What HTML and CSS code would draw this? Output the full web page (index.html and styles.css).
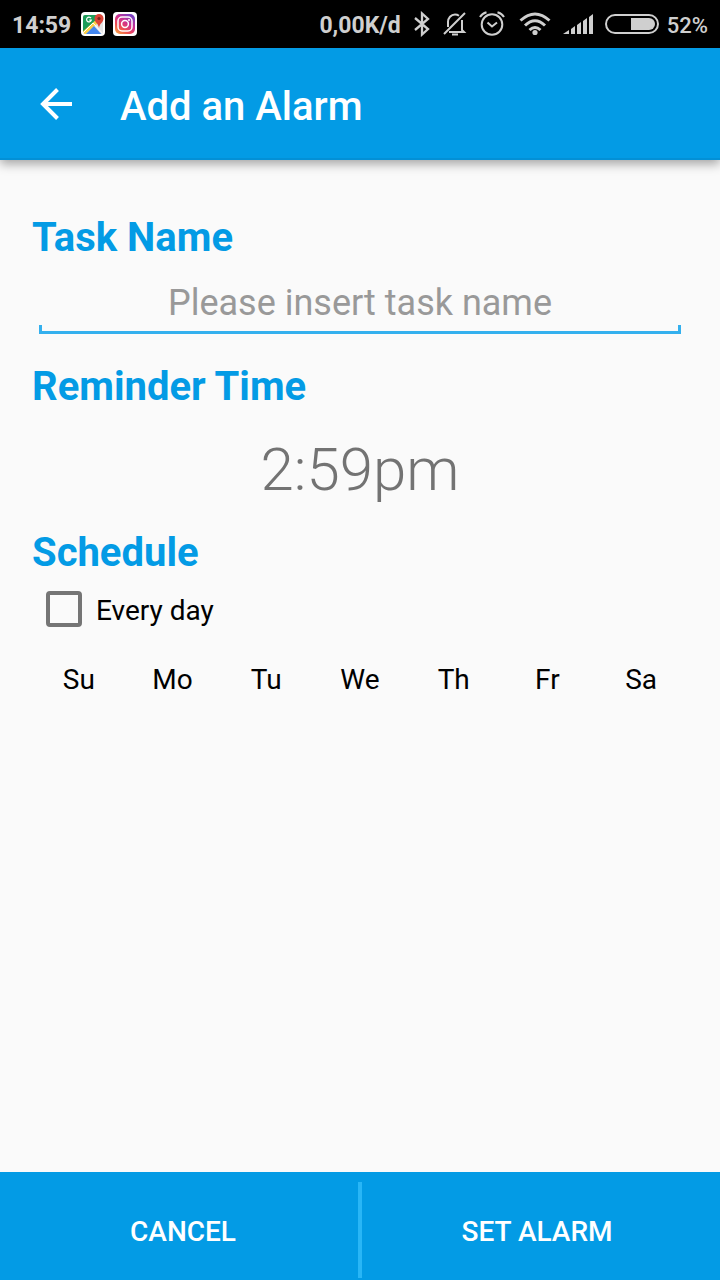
FILE: index.html
```html
<!DOCTYPE html>
<html lang="en">
<head>
    <meta charset="UTF-8">
    <meta name="viewport" content="width=device-width, initial-scale=1">
    <title>Add an Alarm</title>
    <link rel="stylesheet" href="styles.css">
</head>
<body>
<div class="status-bar">
    <div class="status-left">
        <span>14:59</span>
        <!-- maps -->
        <svg width="24" height="24" viewBox="0 0 24 24">
            <defs><clipPath id="mapClip"><rect x="2" y="3" width="20" height="19" rx="2"/></clipPath></defs>
            <rect width="24" height="24" rx="4" fill="#fff"/>
            <g clip-path="url(#mapClip)">
                <rect x="2" y="3" width="20" height="19" fill="#e4e4e4"/>
                <path d="M2 3h15v4L2 20z" fill="#1d9c58"/>
                <path d="M1 20L17 6l2 3L4 23z" fill="#fdd048"/>
                <path d="M4 23l9-9 8 9z" fill="#4286f0"/>
                <path d="M2 21l10-10 11 12" fill="none" stroke="#fff" stroke-width="1"/>
            </g>
            <path d="M10 6.200A2.400 2.400 0 1 0 10.300 8.200H8.300" fill="none" stroke="#fff" stroke-width="1.200"/>
            <path d="M18 2a4.500 4.500 0 0 0-4.500 4.500c0 4 3.800 4.500 4.500 9.500 .7-5 4.500-5.500 4.500-9.500A4.500 4.500 0 0 0 18 2z" fill="#db4437"/>
            <circle cx="18" cy="6.500" r="1.600" fill="#7d241c"/>
        </svg>
        <!-- instagram -->
        <svg width="24" height="24" viewBox="0 0 24 24">
            <defs>
                <linearGradient id="insta" x1="0" y1="1" x2="0.700" y2="0">
                    <stop offset="0" stop-color="#fbb040"/>
                    <stop offset="0.350" stop-color="#ee4d50"/>
                    <stop offset="0.650" stop-color="#cf3090"/>
                    <stop offset="1" stop-color="#7a3fc0"/>
                </linearGradient>
            </defs>
            <rect width="24" height="24" rx="4" fill="#fff"/>
            <rect x="2" y="2" width="20" height="20" rx="5" fill="url(#insta)"/>
            <g fill="none" stroke="#fff" stroke-width="1.500">
                <rect x="5" y="5" width="14" height="14" rx="4"/>
                <circle cx="12" cy="12" r="3.400"/>
            </g>
            <circle cx="16" cy="8" r="1" fill="#fff"/>
        </svg>
    </div>
    <div class="status-right">
        <span>0,00K/d</span>
        <!-- bluetooth -->
        <svg width="18" height="26" viewBox="0 0 18 26" fill="none" stroke="#cfcfcf" stroke-width="2.300">
            <path d="M2 7l13 11-6 5.500V2.500L15 8 2 19"/>
        </svg>
        <!-- muted -->
        <svg width="24" height="26" viewBox="0 0 24 26" fill="none" stroke="#cfcfcf" stroke-width="2">
            <path d="M1 23L22 2M5 16V11c0-4 3-7.500 7-7.500 1.500 0 3 .5 4 1.200M19 9v10l2 2H6"/>
            <path d="M9 23.500h6"/>
        </svg>
        <!-- alarm -->
        <svg class="icon-alarm" width="26" height="26" viewBox="0 0 26 26" fill="none" stroke="#cfcfcf" stroke-width="2">
            <circle cx="13" cy="13.500" r="10.300"/>
            <path d="M8.500 11.500l4.500 4 5-4M1 6q2-3.500 6.500-4.800M25 6q-2-3.500-6.500-4.800"/>
        </svg>
        <!-- wifi -->
        <svg class="icon-wifi" width="32" height="26" viewBox="0 0 32 26" fill="none" stroke="#cfcfcf" stroke-width="3">
            <path d="M1.500 9.500Q16-3.500 30.500 9.500M6 14.500q10-9.500 20 0M10.500 19q5.500-5 11 0"/>
            <circle cx="16" cy="21.500" r="2.600" fill="#cfcfcf" stroke="none"/>
        </svg>
        <!-- signal -->
        <svg class="icon-signal" width="30" height="22" viewBox="0 0 30 22" fill="#cfcfcf">
            <path d="M0 21l6-4v4zM8 16l4-3v8H8zM14 12l4-3v12h-4zM20 8l4-3v16h-4zM26 4l4-3v20h-4z"/>
        </svg>
        <!-- battery -->
        <svg class="icon-battery" width="54" height="22" viewBox="0 0 54 22">
            <rect x="1" y="2" width="52" height="18" rx="9" fill="none" stroke="#cfcfcf" stroke-width="2"/>
            <path d="M26 5h18a6 6 0 0 1 0 12H26z" fill="#cfcfcf"/>
        </svg>
        <span class="percent">52%</span>
    </div>
</div>

<header class="toolbar">
    <button type="button" class="back" aria-label="Back">
        <svg width="32" height="32" viewBox="0 0 32 32" fill="none" stroke="#fff" stroke-width="4">
            <path d="M32 16H3M17.500 1.500L3 16l14.500 14.500"/>
        </svg>
    </button>
    <h1>Add an Alarm</h1>
</header>

<form class="alarm-form" id="alarmForm">
    <h2><label for="taskName">Task Name</label></h2>
    <input type="text" id="taskName" class="task-name" placeholder="Please insert task name">

    <h2>Reminder Time</h2>
    <button type="button" class="time">2:59pm</button>

    <h2>Schedule</h2>
    <div class="every-day">
        <input type="checkbox" id="everyDay">
        <label for="everyDay">Every day</label>
    </div>
    <div class="days">
        <button type="button">Su</button>
        <button type="button">Mo</button>
        <button type="button">Tu</button>
        <button type="button">We</button>
        <button type="button">Th</button>
        <button type="button">Fr</button>
        <button type="button">Sa</button>
    </div>
</form>

<footer class="actions">
    <button type="button">CANCEL</button>
    <span class="divider"></span>
    <button type="submit" form="alarmForm">SET ALARM</button>
</footer>
</body>
</html>
```

FILE: styles.css
```css
* {
    box-sizing: border-box;
}
body {
    margin: 0;
    min-height: 100vh;
    display: flex;
    flex-direction: column;
    background: #fafafa;
    font-family: Roboto, sans-serif;
    color: #000;
}
button {
    padding: 0;
    border: none;
    background: none;
    font-family: inherit;
    color: inherit;
}
svg {
    display: block;
    flex: none;
}

/* status bar */
.status-bar {
    display: flex;
    justify-content: space-between;
    height: 48px;
    padding: 0 12px;
    background: #000;
    color: #cfcfcf;
    font-size: 23px;
    font-weight: 700;
}
.status-left,
.status-right {
    display: flex;
    align-items: center;
}
.status-left {
    gap: 8px;
}
.status-left span {
    padding: 2px 2px 0 0;
}
.status-right {
    gap: 12px;
}
.status-right span {
    padding-top: 2px;
}
.icon-wifi {
    margin-left: 2px;
}
.percent {
    margin-left: -4px;
    font-size: 22px;
    font-weight: 500;
}

/* toolbar */
.toolbar {
    display: flex;
    align-items: center;
    gap: 48px;
    height: 112px;
    padding: 2px 40px 0;
    background: #039be5;
    border-bottom: 2px solid #0390d6;
    box-shadow: 0 4px 10px rgba(0, 0, 0, 0.35);
    color: #fff;
}
.toolbar h1 {
    margin: 0;
    padding-top: 6px;
    font-size: 40px;
    font-weight: 500;
    line-height: 48px;
}

/* form */
.alarm-form {
    flex: 1;
    display: flex;
    flex-direction: column;
    padding: 54px 32px 0;
}
.alarm-form h2 {
    margin: 0;
    font-size: 40px;
    font-weight: 700;
    line-height: 48px;
    color: #039be5;
}
.task-name {
    height: 72px;
    margin: 0 7px 29px;
    padding: 10px 8px 0;
    border: none;
    outline: none;
    /* underline with a small tick at both ends */
    background:
        linear-gradient(#34b0ee, #34b0ee) left bottom / 100% 3px no-repeat,
        linear-gradient(#34b0ee, #34b0ee) left bottom / 3px 9px no-repeat,
        linear-gradient(#34b0ee, #34b0ee) right bottom / 3px 9px no-repeat;
    font-family: inherit;
    font-size: 36px;
    text-align: center;
}
.task-name::placeholder {
    color: #999;
}
.time {
    height: 118px;
    padding-bottom: 2px;
    font-size: 60px;
    font-weight: 300;
    color: #737373;
}
.every-day {
    display: flex;
    align-items: center;
    gap: 14px;
    height: 64px;
    padding-left: 14px;
    font-size: 28px;
}
.every-day label {
    padding-top: 2px;
}
.every-day input {
    appearance: none;
    width: 36px;
    height: 36px;
    margin: 0;
    border: 4px solid #757575;
    border-radius: 4px;
}
.every-day input:checked {
    background: #039be5;
    border-color: #039be5;
}
.days {
    display: grid;
    grid-template-columns: repeat(7, 1fr);
}
.days button {
    height: 76px;
    font-size: 28px;
}

/* bottom buttons */
.actions {
    display: flex;
    height: 108px;
    padding: 10px 8px 2px;
    background: #039be5;
    color: #fff;
}
.actions button {
    flex: 1;
    padding-top: 2px;
    font-size: 28px;
    font-weight: 500;
}
.divider {
    width: 4px;
    background: #29b6f6;
}
```
